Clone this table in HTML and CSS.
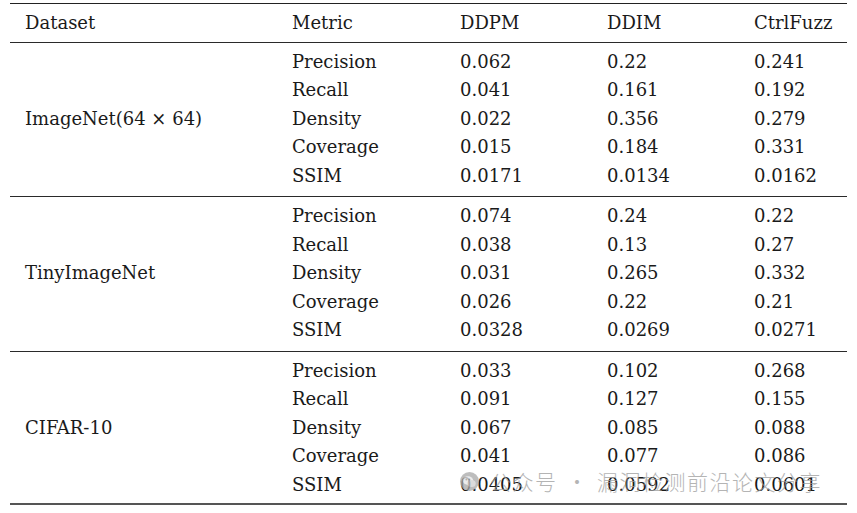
FILE: index.html
```html
<!DOCTYPE html>
<html>
<head>
<meta charset="utf-8">
<link rel="stylesheet" href="styles.css">
</head>
<body>
<div class="page">
  <div class="table">
    <div class="head">
      <div class="cell">Dataset</div>
      <div class="cell">Metric</div>
      <div class="cell">DDPM</div>
      <div class="cell">DDIM</div>
      <div class="cell">CtrlFuzz</div>
    </div>

    <div class="group">
      <div class="ds">ImageNet(64 × 64)</div>
      <div class="cell">Precision</div><div class="cell">0.062</div><div class="cell">0.22</div><div class="cell">0.241</div>
      <div class="cell">Recall</div><div class="cell">0.041</div><div class="cell">0.161</div><div class="cell">0.192</div>
      <div class="cell">Density</div><div class="cell">0.022</div><div class="cell">0.356</div><div class="cell">0.279</div>
      <div class="cell">Coverage</div><div class="cell">0.015</div><div class="cell">0.184</div><div class="cell">0.331</div>
      <div class="cell">SSIM</div><div class="cell">0.0171</div><div class="cell">0.0134</div><div class="cell">0.0162</div>
    </div>

    <div class="group">
      <div class="ds">TinyImageNet</div>
      <div class="cell">Precision</div><div class="cell">0.074</div><div class="cell">0.24</div><div class="cell">0.22</div>
      <div class="cell">Recall</div><div class="cell">0.038</div><div class="cell">0.13</div><div class="cell">0.27</div>
      <div class="cell">Density</div><div class="cell">0.031</div><div class="cell">0.265</div><div class="cell">0.332</div>
      <div class="cell">Coverage</div><div class="cell">0.026</div><div class="cell">0.22</div><div class="cell">0.21</div>
      <div class="cell">SSIM</div><div class="cell">0.0328</div><div class="cell">0.0269</div><div class="cell">0.0271</div>
    </div>

    <div class="group last">
      <div class="ds">CIFAR-10</div>
      <div class="cell">Precision</div><div class="cell">0.033</div><div class="cell">0.102</div><div class="cell">0.268</div>
      <div class="cell">Recall</div><div class="cell">0.091</div><div class="cell">0.127</div><div class="cell">0.155</div>
      <div class="cell">Density</div><div class="cell">0.067</div><div class="cell">0.085</div><div class="cell">0.088</div>
      <div class="cell">Coverage</div><div class="cell">0.041</div><div class="cell">0.077</div><div class="cell">0.086</div>
      <div class="cell">SSIM</div><div class="cell">0.0405</div><div class="cell">0.0592</div><div class="cell">0.0601</div>
    </div>
  </div>

  <div class="watermark">
    <svg class="wm-icon" width="19" height="19" viewBox="0 0 19 19">
      <circle cx="9.5" cy="9.5" r="9.5" fill="#a8a8a8"/>
      <ellipse cx="8" cy="8.5" rx="5.2" ry="4.3" fill="#e6e6e6"/>
      <ellipse cx="11.5" cy="11.5" rx="4.2" ry="3.5" fill="#d0d0d0"/>
      <circle cx="6.3" cy="7.5" r="0.9" fill="#999"/>
      <circle cx="9.5" cy="7.5" r="0.9" fill="#999"/>
    </svg>
    <span class="wm-text">公众号<span class="wm-dot">·</span>漏洞检测前沿论文分享</span>
  </div>
</div>
</body>
</html>
```

FILE: styles.css
```css
html, body {
  margin: 0;
  padding: 0;
  background: #ffffff;
}

.page {
  position: relative;
  width: 857px;
  height: 513px;
  overflow: hidden;
}

.table {
  margin: 3px 10px 0 10px;
  width: 837px;
  border-top: 1.5px solid #222;
  font-family: "DejaVu Serif", "Liberation Serif", serif;
  font-size: 18px;
  color: #1a1a1a;
}

.head,
.group {
  display: grid;
  grid-template-columns: 267px 168px 147px 147px 1fr;
}

.head {
  padding: 5px 0 4px 0;
  border-bottom: 1px solid #2a2a2a;
}

.group {
  grid-template-rows: repeat(5, 28.5px);
  padding: 5px 0 6px 0;
  border-bottom: 1px solid #2a2a2a;
}

.group.last {
  padding-bottom: 4px;
  border-bottom: 2px solid #555;
}

.cell {
  padding-left: 15px;
  height: 28.5px;
  line-height: 28.5px;
  white-space: nowrap;
}

.ds {
  grid-column: 1;
  grid-row: 1 / span 5;
  align-self: center;
  padding-left: 15px;
  line-height: 28.5px;
  white-space: nowrap;
}

.watermark {
  position: absolute;
  left: 460px;
  top: 466px;
  display: flex;
  align-items: center;
  gap: 11px;
  opacity: 0.75;
  pointer-events: none;
}

.wm-text {
  font-family: "Noto Sans CJK SC", "Noto Sans", sans-serif;
  font-size: 21px;
  font-weight: 300;
  letter-spacing: 1.5px;
  color: #9c9c9c;
  white-space: nowrap;
}

.wm-dot {
  display: inline-block;
  margin: 0 8px 0 9px;
}
```
